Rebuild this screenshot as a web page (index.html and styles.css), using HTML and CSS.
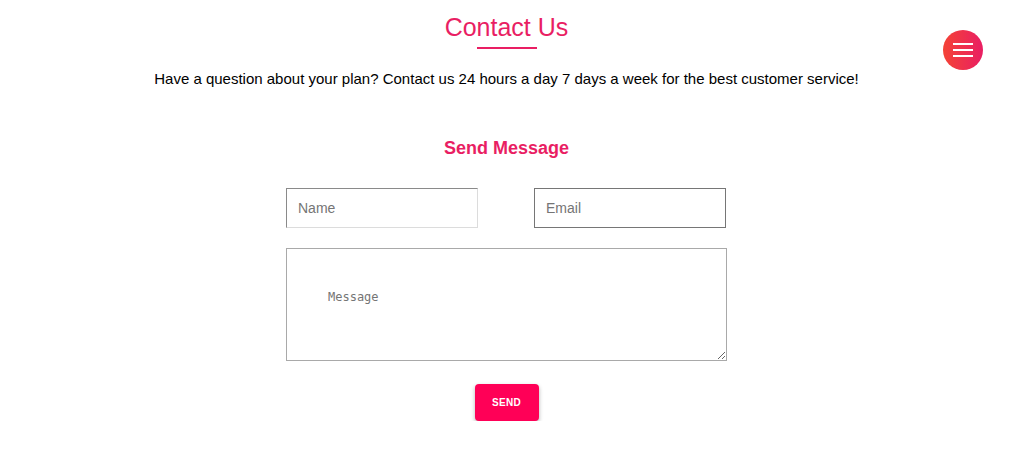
FILE: index.html
```html
<!DOCTYPE html>
<html lang="en">
<head>
<meta charset="utf-8">
<title>Contact Us</title>
<link rel="stylesheet" href="styles.css">
</head>
<body>
<button class="menu-btn" aria-label="Menu">
  <span class="bar"></span><span class="bar"></span><span class="bar"></span>
</button>
<section class="contact">
  <h1 class="title">Contact Us</h1>
  <div class="underline"></div>
  <p class="lead">Have a question about your plan? Contact us 24 hours a day 7 days a week for the best customer service!</p>
  <h2 class="subtitle">Send Message</h2>
  <form class="form">
    <div class="row">
      <input class="field field-name" type="text" placeholder="Name">
      <input class="field field-email" type="email" placeholder="Email">
    </div>
    <textarea class="message" placeholder="Message"></textarea>
    <div class="actions">
      <button type="button" class="send">SEND</button>
    </div>
  </form>
</section>
</body>
</html>
```

FILE: styles.css
```css
html, body {
  margin: 0;
  padding: 0;
  background: #fff;
}
body {
  font-family: "Liberation Sans", Arial, sans-serif;
  color: #000;
}
.contact {
  display: flex;
  flex-direction: column;
  align-items: center;
}
.title {
  margin: 13px 0 0;
  font-size: 25px;
  font-weight: normal;
  color: #e91e63;
  line-height: 29px;
}
.underline {
  width: 60px;
  height: 2px;
  background: #e91e63;
  margin-top: 5px;
}
.lead {
  margin: 21px 0 0;
  font-size: 15px;
  line-height: 17px;
}
.subtitle {
  margin: 51px 0 0;
  font-size: 18px;
  font-weight: bold;
  color: #e91e63;
  line-height: 21px;
}
.form {
  width: 441px;
  margin-top: 29px;
  display: flex;
  flex-direction: column;
}
.row {
  display: flex;
  justify-content: space-between;
  padding-right: 1px;
}
.field {
  box-sizing: border-box;
  width: 192px;
  height: 40px;
  padding: 0 11px;
  font-family: "Liberation Sans", Arial, sans-serif;
  font-size: 14px;
  border: 1px solid #767676;
  outline: none;
  background: #fff;
}
.field-name {
  border-color: #8a8a8a #dcdcdc #dcdcdc #8a8a8a;
}
.field::placeholder {
  color: #757575;
}
.message {
  box-sizing: border-box;
  margin-top: 20px;
  width: 441px;
  height: 113px;
  padding: 41px;
  border: 1px solid #a9a9a9;
  font-family: "DejaVu Sans Mono", monospace;
  font-size: 12px;
  outline: none;
}
.message::placeholder {
  color: #757575;
}
.actions {
  display: flex;
  justify-content: center;
  margin-top: 23px;
}
.send {
  width: 64px;
  height: 37px;
  border: none;
  border-radius: 4px;
  background: #ff0057;
  color: #fff;
  font-family: "Liberation Sans", Arial, sans-serif;
  font-weight: bold;
  font-size: 10px;
  letter-spacing: 0.3px;
  box-shadow: 0 2px 4px rgba(0,0,0,0.3);
  cursor: pointer;
}
.menu-btn {
  position: absolute;
  top: 30px;
  left: 943px;
  width: 40px;
  height: 40px;
  border-radius: 50%;
  border: none;
  padding: 0;
  background: linear-gradient(90deg, #f44336, #e91e63);
  display: flex;
  flex-direction: column;
  align-items: center;
  justify-content: center;
  gap: 4px;
}
.bar {
  display: block;
  width: 20px;
  height: 2px;
  background: #fff;
}
```
